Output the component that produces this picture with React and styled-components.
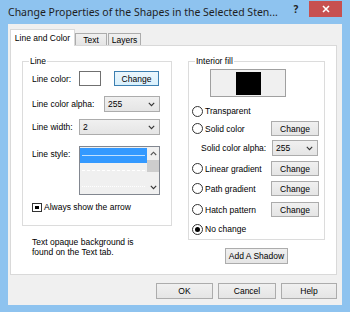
import React from 'react';
import styled, { createGlobalStyle } from 'styled-components';

const GlobalStyle = createGlobalStyle`
  html, body { margin: 0; padding: 0; }
  body {
    font-family: "Liberation Sans", Arial, sans-serif;
    font-size: 8.5px;
    color: #000;
    overflow: hidden;
  }
  * { box-sizing: border-box; }
`;

const Window = styled.div`
  width: 350px;
  height: 312px;
  background: #8ec3ef;
  display: flex;
  flex-direction: column;
  padding: 0 8px 7px;
`;

const TitleBar = styled.div`
  height: 24px;
  flex-shrink: 0;
  display: flex;
  align-items: flex-start;
`;

const Title = styled.div`
  flex: 1;
  font-family: "Noto Sans", "Open Sans", sans-serif;
  font-size: 10.5px;
  line-height: 24px;
  color: #1e1e1e;
  white-space: nowrap;
`;

const HelpGlyph = styled.div`
  width: 12px;
  margin-right: 7px;
  font-family: "Noto Sans", sans-serif;
  font-size: 10px;
  font-weight: bold;
  line-height: 18px;
  text-align: center;
  color: #222;
`;

const CloseButton = styled.div`
  width: 33px;
  height: 16px;
  margin-top: 1px;
  background: #c75050;
  display: flex;
  align-items: center;
  justify-content: center;
`;

const Client = styled.div`
  flex: 1;
  background: #f0f0f0;
  display: flex;
  flex-direction: column;
  padding: 5px 5px 0 2px;
`;

const TabRow = styled.div`
  display: flex;
  align-items: flex-end;
  height: 16px;
`;

const Tab = styled.div`
  position: relative;
  z-index: ${p => (p.$active ? 1 : 0)};
  width: ${p => p.$w}px;
  height: ${p => (p.$active ? 17 : 12)}px;
  margin-bottom: ${p => (p.$active ? -1 : 0)}px;
  margin-right: ${p => (p.$active ? 0 : 1)}px;
  border: 1px solid ${p => (p.$active ? '#d9d9d9' : '#acacac')};
  border-bottom: none;
  background: ${p => (p.$active ? '#fff' : 'linear-gradient(#f0f0f0, #e5e5e5)')};
  display: flex;
  align-items: center;
  justify-content: center;
  white-space: nowrap;
`;

const Panel = styled.div`
  width: 327px;
  height: 230px;
  background: #fff;
  border: 1px solid #d9d9d9;
  display: flex;
  gap: 16px;
  padding: 10px 0 0 11px;
`;

const Column = styled.div`
  width: ${p => p.$w}px;
  display: flex;
  flex-direction: column;
`;

const Group = styled.fieldset`
  margin: 0;
  padding: 0;
  min-width: 0;
  border: 1px solid #dcdcdc;
`;

const Legend = styled.legend`
  margin-left: 6px;
  padding: 0 1px;
  line-height: 10px;
`;

const GroupBody = styled.div`
  display: flex;
  flex-direction: column;
  padding: ${p => p.$pad};
`;

const Row = styled.div`
  display: flex;
  align-items: ${p => (p.$top ? 'flex-start' : 'center')};
  height: ${p => p.$h}px;
  margin-top: ${p => p.$mt || 0}px;
  margin-left: ${p => p.$ml || 0}px;
`;

const Label = styled.div`
  width: ${p => p.$w}px;
  flex-shrink: 0;
  white-space: nowrap;
  padding-top: ${p => p.$pt || 0}px;
`;

const ColorBox = styled.div`
  width: 22px;
  height: 15px;
  background: #fff;
  border: 1px solid #707070;
`;

const Button = styled.div`
  width: ${p => p.$w}px;
  height: ${p => p.$h || 15}px;
  margin-left: ${p => p.$ml || 0}px;
  border: 1px solid ${p => (p.$focus ? '#3c7fb1' : '#acacac')};
  background: ${p =>
    p.$focus ? 'linear-gradient(#eaf6fd, #d9f0fc)' : 'linear-gradient(#f0f0f0, #e5e5e5)'};
  display: flex;
  align-items: center;
  justify-content: center;
  white-space: nowrap;
  flex-shrink: 0;
`;

const SelectBox = styled.div`
  width: ${p => p.$w}px;
  height: 16px;
  border: 1px solid #acacac;
  background: linear-gradient(#f0f0f0, #e5e5e5);
  display: flex;
  align-items: center;
  justify-content: space-between;
  padding: 0 4px 0 3px;
`;

const Chevron = () => (
  <svg width="7" height="5" viewBox="0 0 7 5">
    <path d="M0.8 0.8 L3.5 3.6 L6.2 0.8" fill="none" stroke="#333" strokeWidth="1.1" />
  </svg>
);

const Select = ({ w, value }) => (
  <SelectBox $w={w}>
    <span>{value}</span>
    <Chevron />
  </SelectBox>
);

const ListBox = styled.div`
  width: 81px;
  height: 49px;
  border: 1px solid #828790;
  background: #f0f0f0;
  display: flex;
`;

const ListItems = styled.div`
  flex: 1;
  display: flex;
  flex-direction: column;
  padding-top: 1px;
`;

const StyleItem = styled.div`
  height: 16px;
  background: ${p => (p.$selected ? '#3399ff' : 'transparent')};
  display: flex;
  align-items: center;
  padding: 0 2px;
`;

const StyleLine = styled.div`
  flex: 1;
  border-top: 1px ${p => p.$kind} ${p => (p.$selected ? '#bfe0ff' : '#fff')};
`;

const ScrollBar = styled.div`
  width: 12px;
  display: flex;
  flex-direction: column;
  align-items: center;
  background: #f0f0f0;
`;

const ScrollArrow = styled.div`
  height: 13px;
  width: 100%;
  display: flex;
  align-items: center;
  justify-content: center;
`;

const Thumb = styled.div`
  width: 100%;
  height: 12px;
  background: #cdcdcd;
`;

const Track = styled.div`
  flex: 1;
`;

const CheckBox = styled.div`
  width: 10px;
  height: 9px;
  border: 1px solid #333;
  background: #fff;
  display: flex;
  align-items: center;
  justify-content: center;
  margin-right: 2px;
  &::after {
    content: '';
    width: 4px;
    height: 3px;
    background: #000;
  }
`;

const Preview = styled.div`
  width: 76px;
  height: 28px;
  margin: 3px 0 0 18px;
  border: 1px solid #a0a0a0;
  background: #f0f0f0;
  display: flex;
  justify-content: center;
  align-items: flex-end;
  padding: 0 0 1px 1px;
`;

const Swatch = styled.div`
  width: 25px;
  height: 23px;
  background: #000;
`;

const RadioLabel = styled.div`
  width: 79px;
  display: flex;
  align-items: center;
  gap: 2px;
  white-space: nowrap;
  flex-shrink: 0;
`;

const RadioCircle = styled.div`
  width: 11px;
  height: 11px;
  border-radius: 50%;
  border: 1px solid #333;
  background: #fff;
  display: flex;
  align-items: center;
  justify-content: center;
  &::after {
    content: '';
    width: 5px;
    height: 5px;
    border-radius: 50%;
    background: ${p => (p.$checked ? '#000' : 'transparent')};
  }
`;

const Radio = ({ label, checked }) => (
  <RadioLabel>
    <RadioCircle $checked={checked} />
    <span>{label}</span>
  </RadioLabel>
);

const Note = styled.div`
  margin-top: 11px;
  padding-left: 10px;
  line-height: 10px;
`;

const ShadowButton = styled(Button)`
  margin: 8px auto 0;
`;

const ButtonRow = styled.div`
  width: 327px;
  margin-top: 8px;
  display: flex;
  justify-content: flex-end;
  gap: 5px;
`;

export default function App() {
  return (
    <>
      <GlobalStyle />
      <Window>
        <TitleBar>
          <Title>Change Properties of the Shapes in the Selected Sten...</Title>
          <HelpGlyph>?</HelpGlyph>
          <CloseButton>
            <svg width="8" height="8" viewBox="0 0 8 8">
              <path d="M1 1 L7 7 M7 1 L1 7" stroke="#fff" strokeWidth="1.6" />
            </svg>
          </CloseButton>
        </TitleBar>
        <Client>
          <TabRow>
            <Tab $active $w={65}>Line and Color</Tab>
            <Tab $w={32}>Text</Tab>
            <Tab $w={33}>Layers</Tab>
          </TabRow>
          <Panel>
            <Column $w={150}>
              <Group>
                <Legend>Line</Legend>
                <GroupBody $pad="5px 0 13px 9px">
                  <Row $h={15}>
                    <Label $w={47}>Line color:</Label>
                    <ColorBox />
                    <Button $w={45} $ml={13} $focus>Change</Button>
                  </Row>
                  <Row $h={16} $mt={10}>
                    <Label $w={72}>Line color alpha:</Label>
                    <Select w={56} value="255" />
                  </Row>
                  <Row $h={16} $mt={7}>
                    <Label $w={47}>Line width:</Label>
                    <Select w={81} value="2" />
                  </Row>
                  <Row $h={49} $mt={11} $top>
                    <Label $w={47} $pt={3}>Line style:</Label>
                    <ListBox>
                      <ListItems>
                        <StyleItem $selected>
                          <StyleLine $kind="solid" $selected />
                        </StyleItem>
                        <StyleItem>
                          <StyleLine $kind="dashed" />
                        </StyleItem>
                        <StyleItem>
                          <StyleLine $kind="dotted" />
                        </StyleItem>
                      </ListItems>
                      <ScrollBar>
                        <ScrollArrow>
                          <svg width="7" height="5" viewBox="0 0 7 5">
                            <path d="M0.8 4 L3.5 1.2 L6.2 4" fill="none" stroke="#555" strokeWidth="1.1" />
                          </svg>
                        </ScrollArrow>
                        <Thumb />
                        <Track />
                        <ScrollArrow>
                          <Chevron />
                        </ScrollArrow>
                      </ScrollBar>
                    </ListBox>
                  </Row>
                  <Row $h={10} $mt={7}>
                    <CheckBox />
                    <span>Always show the arrow</span>
                  </Row>
                </GroupBody>
              </Group>
              <Note>
                Text opaque background is
                <br />
                found on the Text tab.
              </Note>
            </Column>
            <Column $w={137}>
              <Group>
                <Legend>Interior fill</Legend>
                <GroupBody $pad="0 0 3px 3px">
                  <Preview>
                    <Swatch />
                  </Preview>
                  <Row $h={14} $mt={7}>
                    <Radio label="Transparent" />
                  </Row>
                  <Row $h={15} $mt={3}>
                    <Radio label="Solid color" />
                    <Button $w={48}>Change</Button>
                  </Row>
                  <Row $h={16} $mt={4} $ml={9}>
                    <Label $w={71}>Solid color alpha:</Label>
                    <Select w={46} value="255" />
                  </Row>
                  <Row $h={15} $mt={5}>
                    <Radio label="Linear gradient" />
                    <Button $w={48}>Change</Button>
                  </Row>
                  <Row $h={15} $mt={5}>
                    <Radio label="Path gradient" />
                    <Button $w={48}>Change</Button>
                  </Row>
                  <Row $h={15} $mt={6}>
                    <Radio label="Hatch pattern" />
                    <Button $w={48}>Change</Button>
                  </Row>
                  <Row $h={14} $mt={5}>
                    <Radio label="No change" checked />
                  </Row>
                </GroupBody>
              </Group>
              <ShadowButton $w={63} $h={16}>Add A Shadow</ShadowButton>
            </Column>
          </Panel>
          <ButtonRow>
            <Button $w={57} $h={16}>OK</Button>
            <Button $w={58} $h={16}>Cancel</Button>
            <Button $w={56} $h={16}>Help</Button>
          </ButtonRow>
        </Client>
      </Window>
    </>
  );
}
